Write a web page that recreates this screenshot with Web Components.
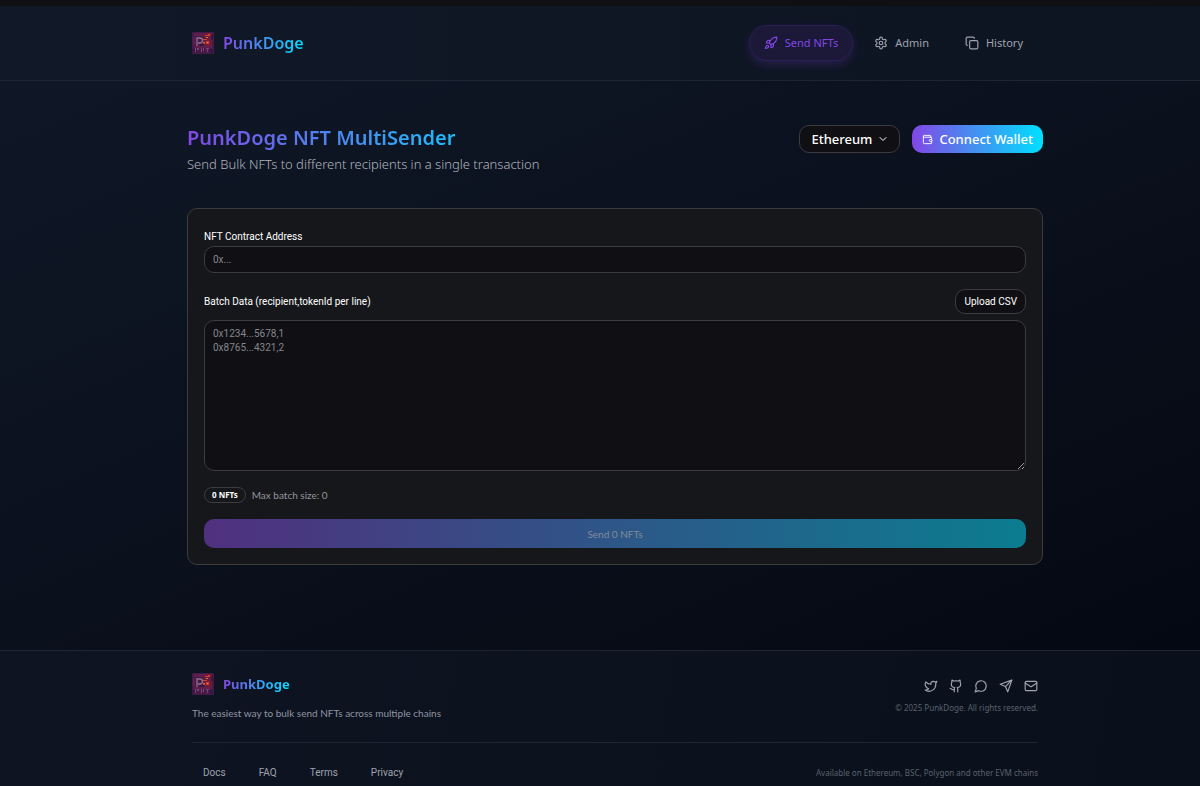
<!DOCTYPE html>
<html lang="en">
<head>
<meta charset="utf-8">
<meta name="viewport" content="width=device-width, initial-scale=1">
<title>PunkDoge NFT MultiSender</title>
<style>
	:root {
		--brand: linear-gradient(90deg, #8247e5, #00e0ff);
		--line: #1e2634;
		--field: #0f0f14;
		--field-line: #3b3b40;
		--ui: "Noto Sans", "Open Sans", sans-serif;
		--text: Roboto, "Noto Sans", sans-serif;
		--muted: Lato, "Noto Sans", sans-serif;
	}
	html {
		overflow-x: hidden;
	}
	body {
		margin: 0;
		font: 10px/14px var(--text);
		color: #fff;
		background: #060911;
	}
</style>
</head>
<body>
<punk-app></punk-app>

<script>
// stroke icons on a 24x24 grid
const ICONS = {
	rocket: '<path d="M4.5 16.5c-1.5 1.26-2 5-2 5s3.74-.5 5-2c.71-.84.7-2.13-.09-2.91a2.18 2.18 0 0 0-2.91-.09z"/><path d="m12 15-3-3a22 22 0 0 1 2-3.95A12.88 12.88 0 0 1 22 2c0 2.72-.78 7.5-6 11a22.35 22.35 0 0 1-4 2z"/><path d="M9 12H4s.55-3.03 2-4c1.62-1.08 5 0 5 0"/><path d="M12 15v5s3.03-.55 4-2c1.08-1.62 0-5 0-5"/>',
	settings: '<path d="M12.22 2h-.44a2 2 0 0 0-2 2v.18a2 2 0 0 1-1 1.73l-.43.25a2 2 0 0 1-2 0l-.15-.08a2 2 0 0 0-2.73.73l-.22.38a2 2 0 0 0 .73 2.73l.15.1a2 2 0 0 1 1 1.72v.51a2 2 0 0 1-1 1.74l-.15.09a2 2 0 0 0-.73 2.73l.22.38a2 2 0 0 0 2.73.73l.15-.08a2 2 0 0 1 2 0l.43.25a2 2 0 0 1 1 1.73V20a2 2 0 0 0 2 2h.44a2 2 0 0 0 2-2v-.18a2 2 0 0 1 1-1.73l.43-.25a2 2 0 0 1 2 0l.15.08a2 2 0 0 0 2.73-.73l.22-.39a2 2 0 0 0-.73-2.73l-.15-.08a2 2 0 0 1-1-1.74v-.5a2 2 0 0 1 1-1.74l.15-.09a2 2 0 0 0 .73-2.73l-.22-.38a2 2 0 0 0-2.73-.73l-.15.08a2 2 0 0 1-2 0l-.43-.25a2 2 0 0 1-1-1.73V4a2 2 0 0 0-2-2z"/><circle cx="12" cy="12" r="3"/>',
	copy: '<rect x="8" y="8" width="14" height="14" rx="2"/><path d="M4 16c-1.1 0-2-.9-2-2V4c0-1.1.9-2 2-2h10c1.1 0 2 .9 2 2"/>',
	wallet: '<path d="M19 7V4a1 1 0 0 0-1-1H5a2 2 0 0 0 0 4h15a1 1 0 0 1 1 1v4h-3a2 2 0 0 0 0 4h3a1 1 0 0 0 1-1v-2a1 1 0 0 0-1-1"/><path d="M3 5v14a2 2 0 0 0 2 2h15a1 1 0 0 0 1-1v-4"/>',
	chevron: '<path d="m6 9 6 6 6-6"/>',
	twitter: '<path d="M22 4s-.7 2.1-2 3.4c1.6 10-9.4 17.3-18 11.6 2.2.1 4.4-.6 6-2C3 15.5.5 9.6 3 5c2.2 2.6 5.6 4.1 9 4-.9-4.2 4-6.6 7-3.8 1.1 0 3-1.2 3-1.2z"/>',
	github: '<path d="M15 22v-4a4.8 4.8 0 0 0-1-3.5c3 0 6-2 6-5.5.08-1.25-.27-2.48-1-3.5.28-1.15.28-2.35 0-3.5 0 0-1 0-3 1.5-2.64-.5-5.36-.5-8 0C6 2 5 2 5 2c-.3 1.15-.3 2.35 0 3.5A5.403 5.403 0 0 0 4 9c0 3.5 3 5.5 6 5.5-.39.49-.68 1.05-.85 1.65-.17.6-.22 1.23-.15 1.85v4"/><path d="M9 18c-4.51 2-5-2-7-2"/>',
	message: '<path d="M7.9 20A9 9 0 1 0 4 16.1L2 22Z"/>',
	send: '<path d="M22 2 11 13"/><path d="m22 2-7 20-4-9-9-4 20-7z"/>',
	mail: '<rect x="2" y="4" width="20" height="16" rx="2"/><path d="m22 7-8.97 5.7a1.94 1.94 0 0 1-2.06 0L2 7"/>'
};

class UiIcon extends HTMLElement {
	connectedCallback() {
		const root = this.attachShadow({ mode: 'open' });
		root.innerHTML = `
			<style>
				:host { display: inline-flex; width: 14px; height: 14px; flex: none; }
				svg { width: 100%; height: 100%; fill: none; stroke: currentColor; stroke-width: 2; stroke-linecap: round; stroke-linejoin: round; }
			</style>
			<svg viewBox="0 0 24 24" aria-hidden="true">${ICONS[this.getAttribute('name')]}</svg>`;
	}
}
customElements.define('ui-icon', UiIcon);

class PunkLogo extends HTMLElement {
	connectedCallback() {
		const root = this.attachShadow({ mode: 'open' });
		root.innerHTML = `
			<style>
				:host { display: block; font: 600 16px/24px var(--ui); }
				a { display: flex; align-items: center; gap: 9px; color: inherit; text-decoration: none; }
				svg { width: 22px; height: 22px; flex: none; }
				span { background: var(--brand); -webkit-background-clip: text; background-clip: text; color: transparent; }
			</style>
			<a href="#">
				<svg viewBox="0 0 22 22" aria-hidden="true">
					<rect width="22" height="22" rx="1" fill="#451a47"/>
					<path fill="#5f1f4c" d="M2 1h9v3H2zM2 14h18v2H2zM1 5h2v8H1zM15 12h5v2h-5z"/>
					<path fill="#6b1c3c" d="M11 1h9v13h-8z"/>
					<path fill="#351543" d="M0 17h3v3H0zM8 12h4v2H8zM19 3h2v5h-2zM18 17h3v4h-3z"/>
					<path fill="none" stroke="#94708f" stroke-width="1.300" d="M5 14V6h3a2.500 2.500 0 0 1 0 5H6"/>
					<path fill="#cf4029" d="M13 3h3v1h-3zM16 2h2v2h-2zM11 7h4v1h-4zM11 10h2v2h-2zM14 9h3v3h-3z"/>
					<path fill="#d97a35" d="M14 5h2v1h-2zM12 10h1v1h-1zM15 10h1v1h-1z"/>
					<path fill="#7d4472" d="M3 16h1v4H3zM5 16h2v2H5zM9 16h1v4H9zM11 16h1v3h-1zM14 16h3v1h-3zM15 17h1v3h-1z"/>
				</svg>
				<span><slot></slot></span>
			</a>`;
	}
}
customElements.define('punk-logo', PunkLogo);

class NavLink extends HTMLElement {
	connectedCallback() {
		const root = this.attachShadow({ mode: 'open' });
		root.innerHTML = `
			<style>
				:host { display: block; }
				a {
					display: flex; align-items: center; gap: 7px; box-sizing: border-box;
					height: 36px; padding: 0 14px; border: 1px solid transparent; border-radius: 18px;
					font: 400 11px/16px var(--ui); color: #9ea3ae; text-decoration: none;
				}
				:host([active]) a {
					color: #8247e5; background: #1b1838; border-color: #2b1f57;
					box-shadow: 0 4px 8px #8247e533;
				}
			</style>
			<a href="#"><ui-icon name="${this.getAttribute('icon')}"></ui-icon><slot></slot></a>`;
	}
}
customElements.define('nav-link', NavLink);

class SiteHeader extends HTMLElement {
	connectedCallback() {
		const root = this.attachShadow({ mode: 'open' });
		root.innerHTML = `
			<style>
				:host { display: block; border-bottom: 1px solid var(--line); background: linear-gradient(90deg, #111827, #0d1421); }
				.inner { display: flex; justify-content: space-between; align-items: center; max-width: 846px; height: 74px; margin: 0 auto; }
				nav { display: flex; gap: 6px; }
			</style>
			<div class="inner">
				<punk-logo>PunkDoge</punk-logo>
				<nav>
					<nav-link icon="rocket" active>Send NFTs</nav-link>
					<nav-link icon="settings">Admin</nav-link>
					<nav-link icon="copy">History</nav-link>
				</nav>
			</div>`;
	}
}
customElements.define('site-header', SiteHeader);

class PageTitle extends HTMLElement {
	connectedCallback() {
		const root = this.attachShadow({ mode: 'open' });
		root.innerHTML = `
			<style>
				:host { display: flex; justify-content: space-between; align-items: flex-start; font-family: var(--ui); }
				h1 {
					margin: 0; font-size: 20px; line-height: 28px; font-weight: 600;
					background: var(--brand); -webkit-background-clip: text; background-clip: text; color: transparent;
				}
				p { margin: 0; font-size: 13px; line-height: 24px; font-weight: 300; color: #b0b4bd; }
				.actions { display: flex; gap: 12px; padding-top: 1px; }
				.network { display: grid; align-items: center; width: 101px; }
				.network > * { grid-area: 1 / 1; }
				.network ui-icon { width: 12px; height: 12px; justify-self: end; margin-right: 11px; pointer-events: none; }
				select, button { height: 28px; box-sizing: border-box; border-radius: 10px; font: 500 13px/20px var(--ui); color: #fff; }
				select { appearance: none; width: 100%; padding: 0 11px; border: 1px solid var(--field-line); background: var(--field); }
				button { display: flex; align-items: center; gap: 6px; padding: 0 10px; border: 0; background: var(--brand); }
				button ui-icon { width: 11px; height: 11px; }
			</style>
			<div>
				<h1>PunkDoge NFT MultiSender</h1>
				<p>Send Bulk NFTs to different recipients in a single transaction</p>
			</div>
			<div class="actions">
				<div class="network">
					<select aria-label="Network"><option>Ethereum</option></select>
					<ui-icon name="chevron"></ui-icon>
				</div>
				<button type="button"><ui-icon name="wallet"></ui-icon>Connect Wallet</button>
			</div>`;
	}
}
customElements.define('page-title', PageTitle);

class SenderForm extends HTMLElement {
	connectedCallback() {
		const root = this.attachShadow({ mode: 'open' });
		root.innerHTML = `
			<style>
				:host { display: block; }
				form { display: grid; gap: 16px; padding: 21px 16px 16px; border: 1px solid var(--field-line); border-radius: 10px; background: #16171b; }
				.field { display: grid; gap: 2px; }
				.batch { gap: 6px; }
				input, textarea {
					display: block; box-sizing: border-box; width: 100%; margin: 0; padding: 6px 8px;
					border: 1px solid var(--field-line); border-radius: 10px; background: var(--field);
					font: inherit; color: #fff; outline: 0;
				}
				input { height: 27px; }
				textarea { height: 151px; resize: vertical; }
				::placeholder { color: #85868c; opacity: 1; }
				.row { display: flex; align-items: center; justify-content: space-between; }
				button { font: inherit; color: #fff; border-radius: 10px; box-sizing: border-box; }
				.upload { height: 25px; padding: 0 8px; border: 1px solid var(--field-line); background: var(--field); }
				.status { display: flex; align-items: center; gap: 6px; font-family: var(--muted); color: #94959b; }
				.badge { padding: 0 7px; border: 1px solid var(--field-line); border-radius: 9px; font: 700 8px/14px var(--ui); color: #fff; }
				.submit { height: 29px; border: 0; font-family: var(--muted); color: #838a99; background: linear-gradient(90deg, #50307f, #0b7d90); }
			</style>
			<form>
				<div class="field">
					<label for="contract">NFT Contract Address</label>
					<input id="contract" type="text" placeholder="0x...">
				</div>
				<div class="field batch">
					<div class="row">
						<label for="batch">Batch Data (recipient,tokenId per line)</label>
						<button class="upload" type="button">Upload CSV</button>
					</div>
					<textarea id="batch" placeholder="0x1234...5678,1&#10;0x8765...4321,2"></textarea>
				</div>
				<div class="status"><span class="badge">0 NFTs</span><span>Max batch size: 0</span></div>
				<button class="submit" type="submit" disabled>Send 0 NFTs</button>
			</form>`;
	}
}
customElements.define('sender-form', SenderForm);

class SiteFooter extends HTMLElement {
	connectedCallback() {
		const root = this.attachShadow({ mode: 'open' });
		root.innerHTML = `
			<style>
				:host { display: block; border-top: 1px solid var(--line); background: linear-gradient(100deg, #0e1421, #09101b); }
				.inner { max-width: 846px; margin: 0 auto; padding-top: 21px; }
				.top, .bottom { display: flex; justify-content: space-between; }
				.top { padding-bottom: 22px; border-bottom: 1px solid var(--line); }
				punk-logo { font-size: 13px; font-weight: 700; }
				p { margin: 10px 0 0; font-family: var(--muted); color: #8f95a2; }
				.side { display: flex; flex-direction: column; align-items: flex-end; gap: 8px; padding-top: 7px; }
				.social { display: flex; gap: 11px; }
				.social a { display: flex; color: #9ea3ae; }
				small { font: 8px/14px var(--ui); color: #5b616e; }
				.bottom { align-items: center; padding: 23px 0 16px; }
				nav { display: flex; gap: 33px; padding-left: 11px; }
				nav a { color: #9ea3ae; text-decoration: none; }
			</style>
			<div class="inner">
				<div class="top">
					<div>
						<punk-logo>PunkDoge</punk-logo>
						<p>The easiest way to bulk send NFTs across multiple chains</p>
					</div>
					<div class="side">
						<div class="social">
							<a href="#" aria-label="Twitter"><ui-icon name="twitter"></ui-icon></a>
							<a href="#" aria-label="GitHub"><ui-icon name="github"></ui-icon></a>
							<a href="#" aria-label="Chat"><ui-icon name="message"></ui-icon></a>
							<a href="#" aria-label="Telegram"><ui-icon name="send"></ui-icon></a>
							<a href="#" aria-label="Email"><ui-icon name="mail"></ui-icon></a>
						</div>
						<small>© 2025 PunkDoge. All rights reserved.</small>
					</div>
				</div>
				<div class="bottom">
					<nav><a href="#">Docs</a><a href="#">FAQ</a><a href="#">Terms</a><a href="#">Privacy</a></nav>
					<small>Available on Ethereum, BSC, Polygon and other EVM chains</small>
				</div>
			</div>`;
	}
}
customElements.define('site-footer', SiteFooter);

class PunkApp extends HTMLElement {
	connectedCallback() {
		const root = this.attachShadow({ mode: 'open' });
		root.innerHTML = `
			<style>
				/* the page is a little wider than the window, it runs under the right edge */
				:host { display: block; width: calc(100% + 30px); border-top: 6px solid #110f14; box-sizing: border-box; background: linear-gradient(157deg, #101828, #0a101c 49%, #040812 88%); }
				main { max-width: 856px; margin: 0 auto; padding: 43px 0 85px; }
				sender-form { margin-top: 32px; }
			</style>
			<site-header></site-header>
			<main>
				<page-title></page-title>
				<sender-form></sender-form>
			</main>
			<site-footer></site-footer>`;
	}
}
customElements.define('punk-app', PunkApp);
</script>
</body>
</html>
